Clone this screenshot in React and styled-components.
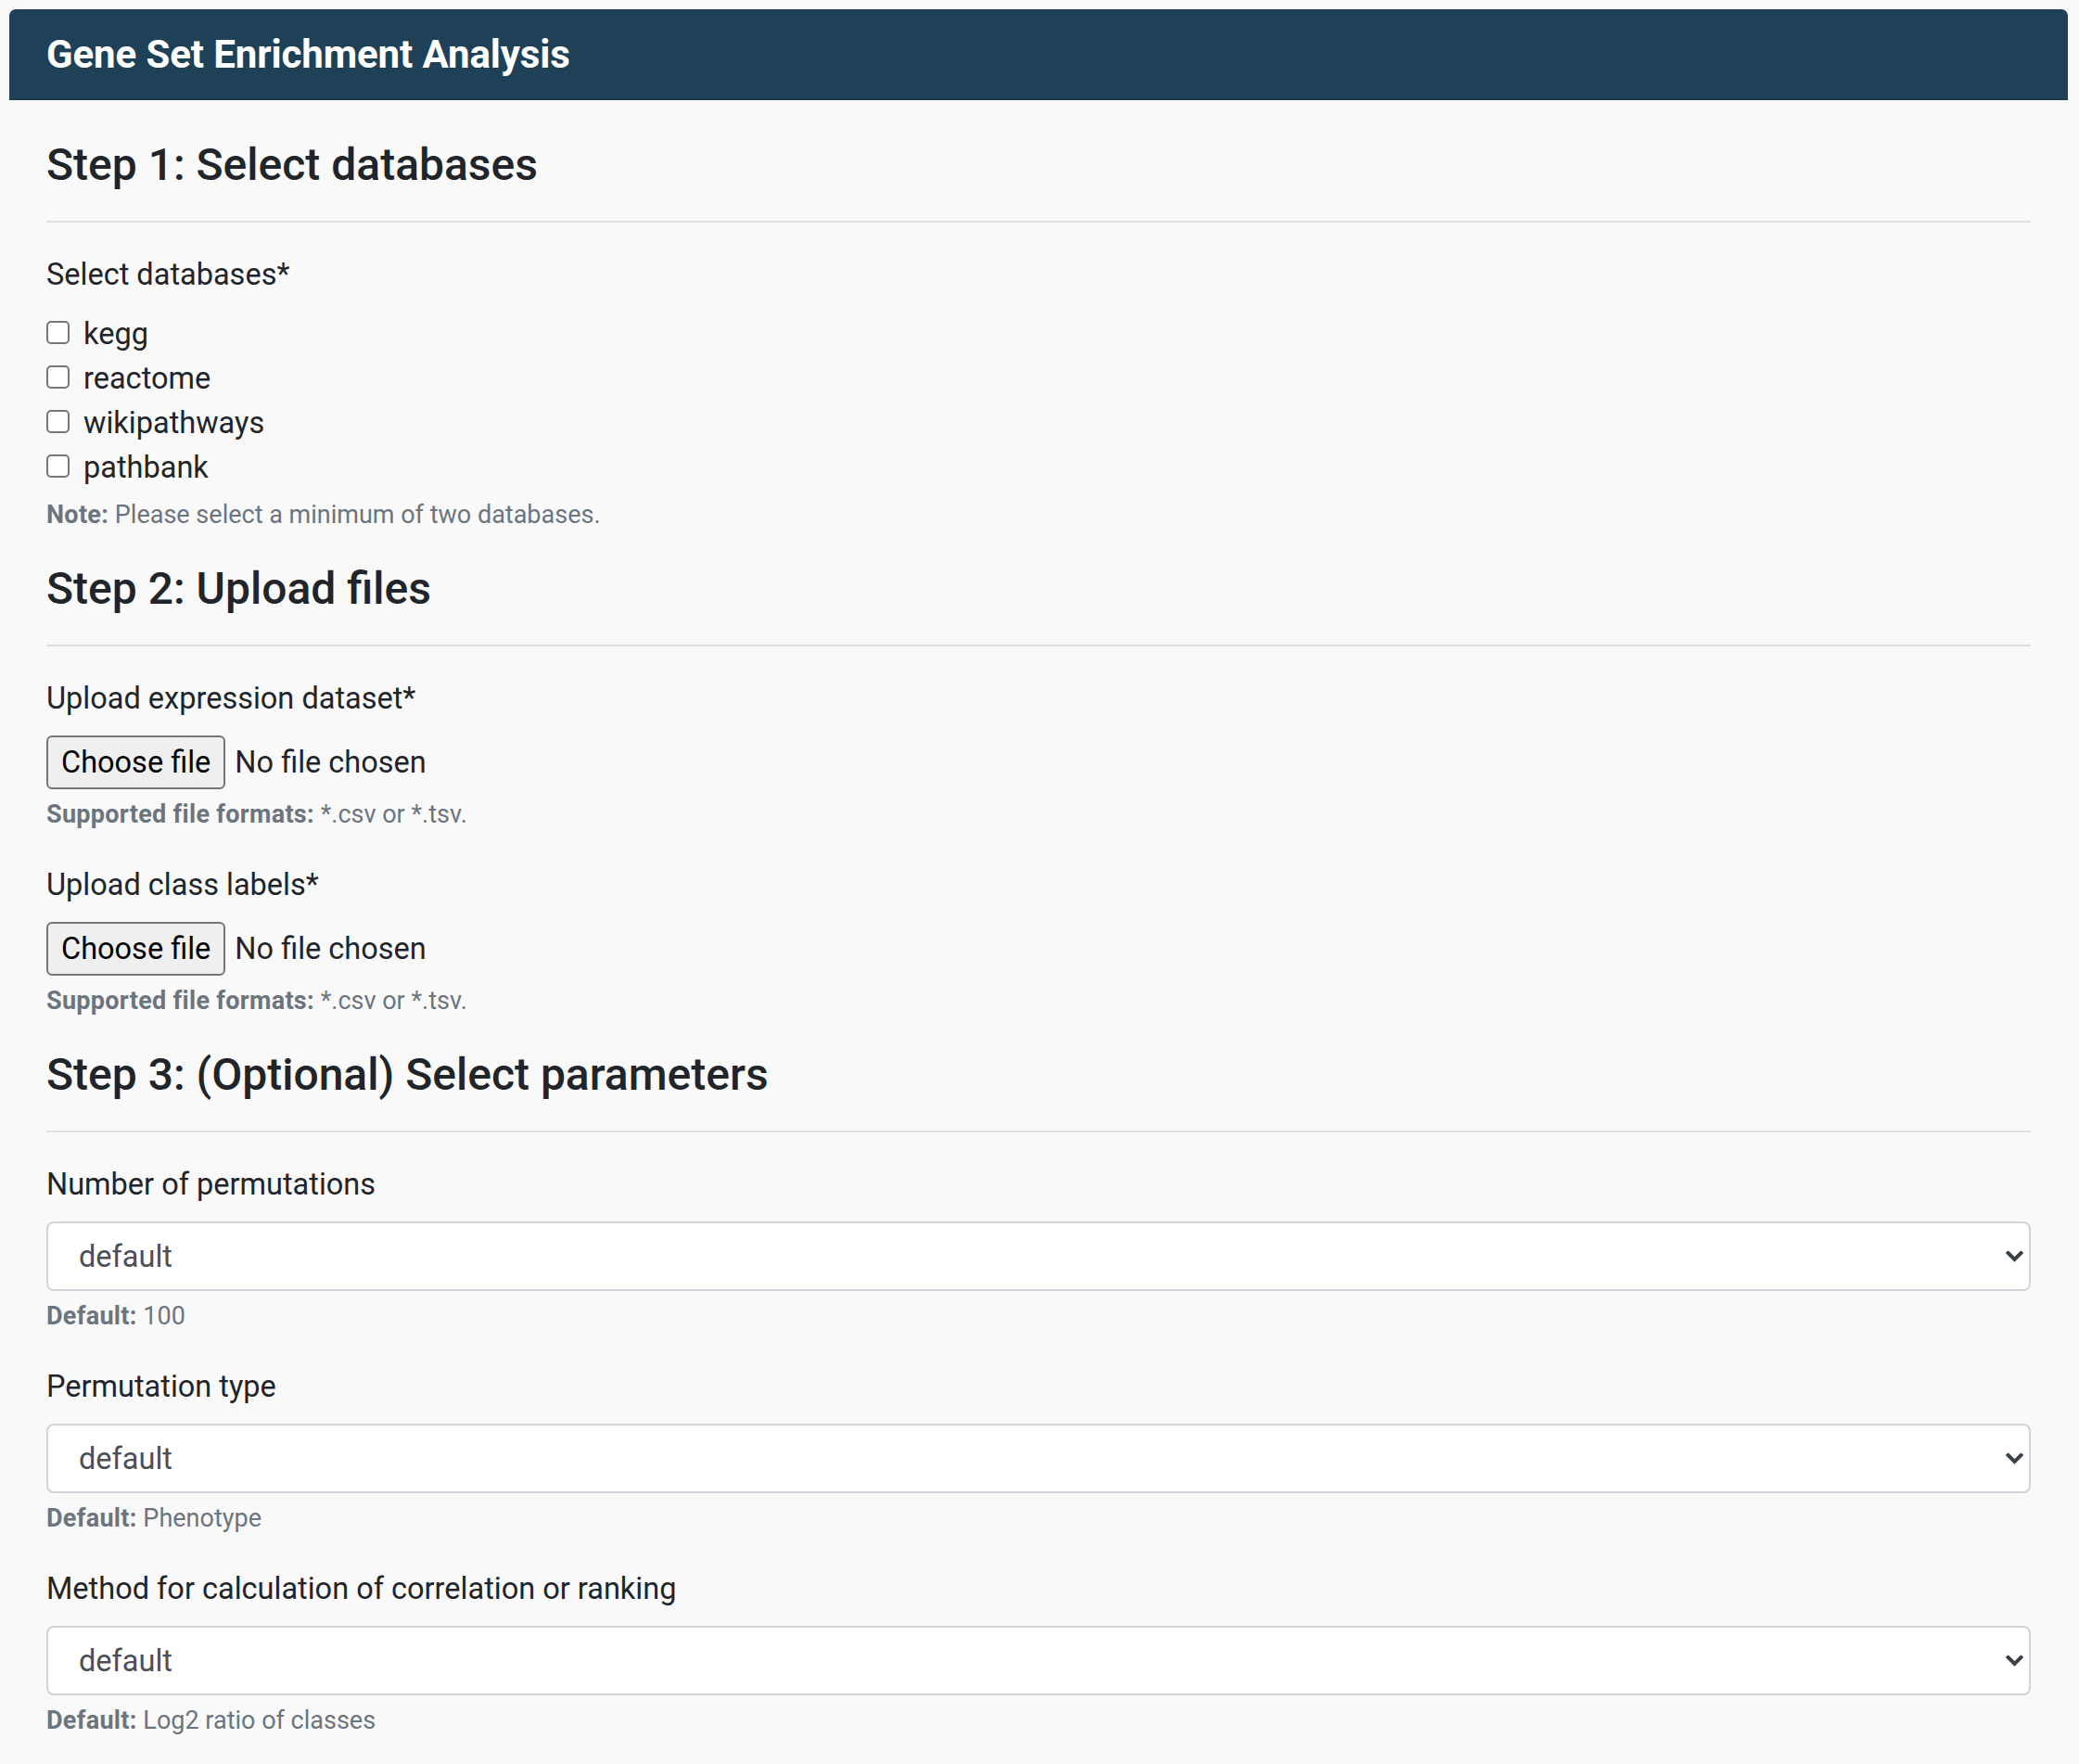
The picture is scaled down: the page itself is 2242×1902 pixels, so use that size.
import React from "react";
import styled, { createGlobalStyle } from "styled-components";

const GlobalStyle = createGlobalStyle`
  html, body {
    margin: 0;
    padding: 0;
    background: #f9f9f9;
    overflow: hidden;
  }
  body {
    font-family: Roboto, "Liberation Sans", Arial, sans-serif;
    color: #212529;
  }
  * { box-sizing: border-box; }
`;

const Page = styled.div`
  padding: 10px 12px 0 10px;
`;

const Card = styled.div`
  border-radius: 7px 7px 0 0;
  background: #f9f9f9;
`;

const CardHeader = styled.header`
  background: #1f4158;
  border-bottom: 1px solid #1a3749;
  border-radius: 7px 7px 0 0;
  padding: 25px 40px 24px;
`;

const Title = styled.h5`
  margin: 0;
  font-size: 42px;
  line-height: 48px;
  font-weight: 700;
  color: #ffffff;
  letter-spacing: -0.1px;
`;

const CardBody = styled.main`
  padding: 42px 40px 20px;
`;

const StepHeading = styled.h4`
  margin: 0;
  font-size: 48px;
  line-height: 56px;
  font-weight: 500;
  color: #212529;
`;

const Divider = styled.hr`
  border: 0;
  border-top: 2px solid #e0e0e0;
  margin: 32px 0;
`;

const FieldGroup = styled.div`
  margin-bottom: ${(p) => (p.$last ? "0" : "32px")};
`;

const FieldLabel = styled.label`
  display: block;
  font-size: 32.5px;
  line-height: 48px;
  margin-bottom: 16px;
`;

const CheckList = styled.div`
  display: flex;
  flex-direction: column;
`;

const CheckRow = styled.label`
  display: flex;
  align-items: center;
  gap: 15px;
  height: 48px;
  font-size: 32.5px;
`;

const CheckBox = styled.input.attrs({ type: "checkbox" })`
  appearance: none;
  margin: 0 0 3px 0;
  width: 25px;
  height: 25px;
  border: 2px solid #767676;
  border-radius: 5px;
  background: #ffffff;
  flex: none;
`;

const FileRow = styled.div`
  display: flex;
  align-items: center;
  gap: 10px;
  height: 58px;
`;

const FileButton = styled.button`
  height: 58px;
  padding: 0 14px;
  border: 2px solid #767676;
  border-radius: 6px;
  background: #efefef;
  color: #000000;
  font-family: inherit;
  font-size: 32.5px;
`;

const FileStatus = styled.span`
  font-size: 32.5px;
  color: #212529;
`;

const SelectWrap = styled.div`
  position: relative;
`;

const Select = styled.select`
  appearance: none;
  display: block;
  width: 100%;
  height: 75px;
  padding: 0 60px 0 33px;
  border: 2px solid #ced4da;
  border-radius: 8px;
  background: #ffffff;
  color: #495057;
  font-family: inherit;
  font-size: 32.5px;
`;

const Chevron = styled.svg`
  position: absolute;
  right: 8px;
  top: 50%;
  transform: translateY(-50%);
  width: 19px;
  height: 13px;
  pointer-events: none;
`;

const Help = styled.div`
  margin-top: 8px;
  font-size: 27px;
  line-height: 39px;
  color: #6c757d;

  strong {
    font-weight: 700;
    letter-spacing: 0.3px;
  }
`;

const databases = ["kegg", "reactome", "wikipathways", "pathbank"];

function FileField({ label }) {
  return (
    <FieldGroup>
      <FieldLabel>{label}</FieldLabel>
      <FileRow>
        <FileButton type="button">Choose file</FileButton>
        <FileStatus>No file chosen</FileStatus>
      </FileRow>
      <Help>
        <strong>Supported file formats:</strong> *.csv or *.tsv.
      </Help>
    </FieldGroup>
  );
}

function SelectField({ label, def, last }) {
  return (
    <FieldGroup $last={last}>
      <FieldLabel>{label}</FieldLabel>
      <SelectWrap>
        <Select defaultValue="default">
          <option value="default">default</option>
        </Select>
        <Chevron viewBox="0 0 19 13" fill="none">
          <path
            d="M2.5 2.5 L9.5 9.5 L16.5 2.5"
            stroke="#3b4046"
            strokeWidth="4"
            strokeLinecap="square"
          />
        </Chevron>
      </SelectWrap>
      <Help>
        <strong>Default:</strong> {def}
      </Help>
    </FieldGroup>
  );
}

export default function App() {
  return (
    <>
      <GlobalStyle />
      <Page>
        <Card>
          <CardHeader>
            <Title>Gene Set Enrichment Analysis</Title>
          </CardHeader>
          <CardBody>
            <StepHeading>Step 1: Select databases</StepHeading>
            <Divider />
            <FieldGroup>
              <FieldLabel>Select databases*</FieldLabel>
              <CheckList>
                {databases.map((db) => (
                  <CheckRow key={db}>
                    <CheckBox />
                    {db}
                  </CheckRow>
                ))}
              </CheckList>
              <Help>
                <strong>Note:</strong> Please select a minimum of two databases.
              </Help>
            </FieldGroup>

            <StepHeading>Step 2: Upload files</StepHeading>
            <Divider />
            <FileField label="Upload expression dataset*" />
            <FileField label="Upload class labels*" />

            <StepHeading>Step 3: (Optional) Select parameters</StepHeading>
            <Divider />
            <SelectField label="Number of permutations" def="100" />
            <SelectField label="Permutation type" def="Phenotype" />
            <SelectField
              label="Method for calculation of correlation or ranking"
              def="Log2 ratio of classes"
              last
            />
          </CardBody>
        </Card>
      </Page>
    </>
  );
}
